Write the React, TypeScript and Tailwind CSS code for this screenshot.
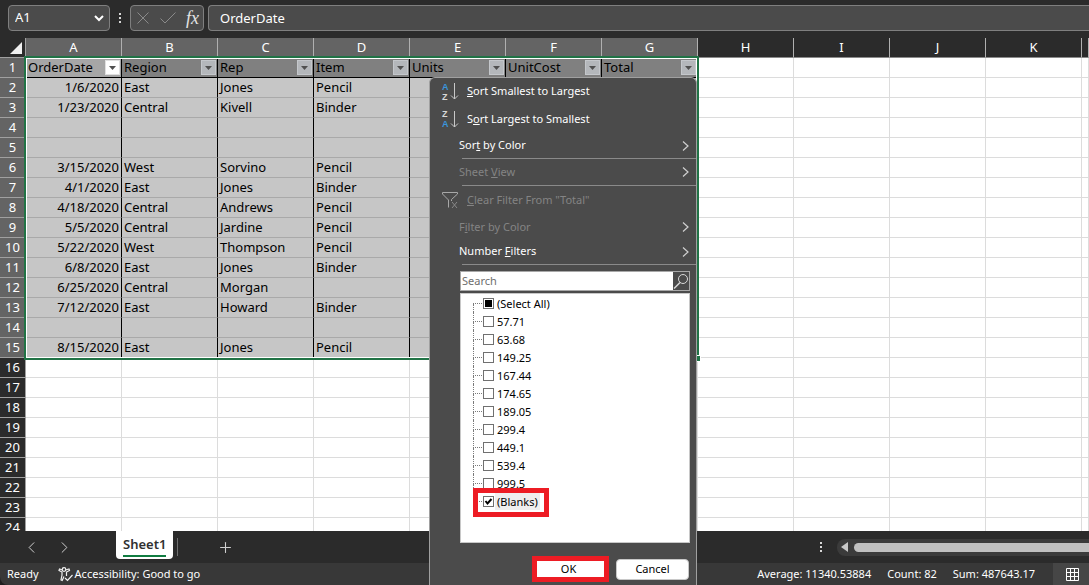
import React from 'react';
import { ChevronLeft, ChevronRight, Plus } from 'lucide-react';

const COLUMNS = ['A', 'B', 'C', 'D', 'E', 'F', 'G', 'H', 'I', 'J', 'K', ''];
const FIELDS = ['OrderDate', 'Region', 'Rep', 'Item', 'Units', 'UnitCost', 'Total'];

const DATA: string[][] = [
  ['1/6/2020', 'East', 'Jones', 'Pencil'],
  ['1/23/2020', 'Central', 'Kivell', 'Binder'],
  [],
  [],
  ['3/15/2020', 'West', 'Sorvino', 'Pencil'],
  ['4/1/2020', 'East', 'Jones', 'Binder'],
  ['4/18/2020', 'Central', 'Andrews', 'Pencil'],
  ['5/5/2020', 'Central', 'Jardine', 'Pencil'],
  ['5/22/2020', 'West', 'Thompson', 'Pencil'],
  ['6/8/2020', 'East', 'Jones', 'Binder'],
  ['6/25/2020', 'Central', 'Morgan', ''],
  ['7/12/2020', 'East', 'Howard', 'Binder'],
  [],
  ['8/15/2020', 'East', 'Jones', 'Pencil'],
];

const ROWS = Array.from({ length: 24 }, (_, i) => i + 1);
const LAST_SELECTED_ROW = 15;

const VALUES = ['57.71', '63.68', '149.25', '167.44', '174.65', '189.05', '299.4', '449.1', '539.4', '999.5'];

const FormulaBar = () => (
  <header className="flex h-[38px] shrink-0 items-start bg-[#2b2b2b] pt-[5px] pl-2 text-[13px] text-white">
    <div className="flex h-[26px] w-[102px] items-center rounded border border-[#7f7f7f] bg-[#4b4b4b] pl-1.5">
      <input aria-label="Name box" defaultValue="A1" className="w-[78px] bg-transparent outline-none" />
      <button aria-label="Show names">
        <svg width="12" height="10" viewBox="0 0 12 10" fill="none" stroke="#fff" strokeWidth="2">
          <path d="M2 3l4 4 4-4" />
        </svg>
      </button>
    </div>
    <svg className="mx-[9px] mt-2" width="2" height="12" viewBox="0 0 2 12" fill="#d8d8d8">
      <path d="M0 0h2v2H0zM0 4h2v2H0zM0 8h2v2H0z" />
    </svg>
    <div className="flex h-[26px] w-[74px] items-center justify-between rounded border border-[#7f7f7f] bg-[#4b4b4b] pr-1 pl-1.5">
      <button aria-label="Cancel entry">
        <svg width="12" height="12" viewBox="0 0 12 12" stroke="#8a8a8a">
          <path d="M0.5 0.5l11 11M11.5 0.5l-11 11" />
        </svg>
      </button>
      <button aria-label="Enter">
        <svg width="16" height="12" viewBox="0 0 16 12" fill="none" stroke="#8a8a8a">
          <path d="M0.5 6.5l4.5 4.5L15.5 0.5" />
        </svg>
      </button>
      <button aria-label="Insert function" className="font-['Liberation_Serif',serif] text-[18px] leading-5 text-[#e4e4e4] italic">
        fx
      </button>
    </div>
    <input
      aria-label="Formula"
      defaultValue="OrderDate"
      className="ml-1 h-[26px] min-w-0 flex-1 rounded-l border border-r-0 border-[#7f7f7f] bg-[#4b4b4b] pl-[11px] outline-none"
    />
  </header>
);

const FilterButton = ({ name, active }: { name: string; active: boolean }) => (
  <button
    aria-label={`Filter ${name}`}
    className={`flex h-[15px] w-[15px] items-center justify-center border ${active ? 'border-[#e0e0e0] bg-white' : 'border-[#c4c7cb] bg-[#b4b7bb]'}`}
  >
    <svg width="7" height="4" viewBox="0 0 7 4" fill="#505050">
      <path d="M0 0h7L3.5 4z" />
    </svg>
  </button>
);

const cellClass = (row: number, col: number) => {
  if (row > LAST_SELECTED_ROW || col > 6) return 'border-[#dcdcdc] bg-white';
  const side = col < 6 ? 'border-r-black' : 'border-r-[#a9a9a9]';
  if (row === 1) return `${side} border-b-black ${col === 0 ? 'bg-[#a6a6a6]' : 'bg-[#808080]'}`;
  return `${side} border-b-[#a9a9a9] bg-[#c6c6c6]`;
};

const Sheet = () => (
  <main className="relative min-h-0 flex-1 overflow-hidden bg-white">
    <table className="w-full table-fixed border-separate border-spacing-0 text-[13px] leading-[19px] text-black">
      <colgroup>
        <col className="w-[26px]" />
        {COLUMNS.map((c) => (
          <col key={c} className={c ? 'w-24' : ''} />
        ))}
      </colgroup>
      <thead>
        <tr className="text-white">
          <th className="h-5 border-r border-b border-[#a0a0a0] bg-[#2b2b2b] p-0">
            <svg className="mr-[3px] ml-auto" width="12" height="12" viewBox="0 0 12 12" fill="#f0f0f0">
              <path d="M12 0v12H0z" />
            </svg>
          </th>
          {COLUMNS.map((c, i) => (
            <th
              key={c}
              className={`h-5 border-r border-b p-0 font-normal ${i < 7 ? 'border-[#b0b0b0] bg-[#646464]' : 'border-r-[#b0b0b0] border-b-[#8a8a8a] bg-[#2b2b2b]'}`}
            >
              {c}
            </th>
          ))}
        </tr>
      </thead>
      <tbody>
        {ROWS.map((row) => (
          <tr key={row}>
            <th
              className={`h-5 border-r border-b border-[#a0a0a0] p-0 font-normal text-white ${row <= LAST_SELECTED_ROW ? 'bg-[#646464]' : 'bg-[#2b2b2b]'}`}
            >
              {row}
            </th>
            {COLUMNS.map((c, col) => (
              <td
                key={c}
                className={`h-5 overflow-hidden border-r border-b p-0 whitespace-nowrap ${cellClass(row, col)} ${row > 1 && col === 0 ? 'pr-0.5 text-right' : 'pl-0.5'}`}
              >
                {row === 1 && col < 7 ? (
                  <div className="flex items-center justify-between pr-px">
                    {FIELDS[col]}
                    <FilterButton name={FIELDS[col]} active={col === 0} />
                  </div>
                ) : (
                  row > 1 && DATA[row - 2]?.[col]
                )}
              </td>
            ))}
          </tr>
        ))}
      </tbody>
    </table>
    {/* Selection frame with its fill handle */}
    <div className="pointer-events-none absolute top-[18px] left-6 h-[304px] w-[675px] border-2 border-[#217346]">
      <div className="h-full border border-white" />
      <div className="absolute -right-1 -bottom-1 h-[7px] w-[7px] border border-white bg-[#217346]" />
    </div>
  </main>
);

const SortIcon = ({ top, bottom }: { top: string; bottom: string }) => (
  <span className="flex w-[18px] items-center pl-px">
    <span className="flex flex-col font-['Liberation_Sans',sans-serif] text-[9px] leading-[10px] font-bold">
      <span className={top === 'A' ? 'text-[#3a96dd]' : 'text-[#d8d8d8]'}>{top}</span>
      <span className={bottom === 'A' ? 'text-[#3a96dd]' : 'text-[#d8d8d8]'}>{bottom}</span>
    </span>
    <svg className="ml-auto" width="9" height="17" viewBox="0 0 9 17" fill="none" stroke="#c8c8c8">
      <path d="M4.5 0v16M1 12.5L4.5 16 8 12.5" />
    </svg>
  </span>
);

const ClearFilterIcon = () => (
  <svg width="18" height="17" viewBox="0 0 18 17" fill="none" stroke="#a8a8a8">
    <path d="M7.5 15.5V8L1.5 2V0.5h15V2L10.5 7.5V9" />
    <path d="M11 10l5 6M16 10L11 16" stroke="#8a8a8a" />
  </svg>
);

interface ItemProps {
  className: string;
  icon?: React.ReactNode;
  arrow?: boolean;
  disabled?: boolean;
  children: React.ReactNode;
}

const MenuItem = ({ className, icon, arrow, disabled, children }: ItemProps) => (
  <button
    disabled={disabled}
    className={`flex w-full items-center pr-1.5 text-left ${icon ? 'gap-2 pl-[11px]' : 'pl-[29px]'} ${disabled ? 'text-[#848484]' : 'text-white'} ${className}`}
  >
    {icon}
    <span>{children}</span>
    {arrow && (
      <svg className="ml-auto" width="9" height="10" viewBox="0 0 9 10" fill="none" stroke="#d0d0d0" strokeWidth="1.2">
        <path d="M2 0.5L7 5 2 9.5" />
      </svg>
    )}
  </button>
);

const Separator = () => <hr className="ml-8 border-[#8a8a8a]" />;

interface CheckRowProps {
  label: string;
  state?: 'checked' | 'mixed';
  first?: boolean;
  last?: boolean;
}

const CheckRow = ({ label, state, first, last }: CheckRowProps) => (
  <li className="relative flex h-[18px] items-center">
    <span className="flex h-full w-[9px] flex-col">
      <span className={`h-[10px] border-b border-dotted border-[#7a7a7a] ${first ? '' : 'border-l'}`} />
      <span className={`h-2 border-dotted border-[#7a7a7a] ${last ? '' : 'border-l'}`} />
    </span>
    <label className="flex items-center gap-px">
      <span className="ml-px grid">
        <input
          type="checkbox"
          defaultChecked={state === 'checked'}
          ref={(el) => {
            if (el) el.indeterminate = state === 'mixed';
          }}
          className="col-start-1 row-start-1 h-[11px] w-[11px] appearance-none border border-[#707070] bg-white"
        />
        {state && (
          <svg className="col-start-1 row-start-1" width="11" height="11" viewBox="0 0 11 11" fill="none">
            {state === 'mixed' ? (
              <path d="M2 2h7v7H2z" fill="#000" />
            ) : (
              <path d="M2.5 5l2 2.5L8.5 3" stroke="#000" strokeWidth="2" />
            )}
          </svg>
        )}
      </span>
      <span className={`px-0.5 leading-[17px] ${last ? 'bg-[#efeeee]' : ''}`}>{label}</span>
    </label>
    {last && <span className="pointer-events-none absolute -top-1 left-0 h-[29px] w-[76px] border-5 border-[#ed1c24]" />}
  </li>
);

const FilterMenu = () => (
  <section
    aria-label="Filter Total"
    className="absolute top-[77px] bottom-0 left-[429px] w-[268px] overflow-hidden rounded-t-md border border-b-0 border-[#a0a0a0] bg-[#4b4b4b] text-[11px]"
  >
    <MenuItem className="h-[27px]" icon={<SortIcon top="A" bottom="Z" />}>
      <u>S</u>ort Smallest to Largest
    </MenuItem>
    <MenuItem className="h-7" icon={<SortIcon top="Z" bottom="A" />}>
      S<u>o</u>rt Largest to Smallest
    </MenuItem>
    <MenuItem className="h-[25px]" arrow>
      Sor<u>t</u> by Color
    </MenuItem>
    <Separator />
    <MenuItem className="h-[26px]" arrow disabled>
      Sheet <u>V</u>iew
    </MenuItem>
    <Separator />
    <MenuItem className="h-[29px]" icon={<ClearFilterIcon />} disabled>
      <u>C</u>lear Filter From "Total"
    </MenuItem>
    <MenuItem className="h-6" arrow disabled>
      F<u>i</u>lter by Color
    </MenuItem>
    <MenuItem className="h-[25px]" arrow>
      Number <u>F</u>ilters
    </MenuItem>
    <Separator />

    <div className="mt-1.5 mr-1.5 ml-[30px]">
      <div className="flex h-5 border border-[#a8a8a8]">
        <input
          aria-label="Search"
          placeholder="Search"
          className="min-w-0 flex-1 bg-white pl-px text-black outline-none placeholder:text-[#6e6e6e]"
        />
        <button aria-label="Find">
          <svg width="16" height="16" viewBox="0 0 16 16" fill="none" stroke="#d8d8d8">
            <circle cx="10" cy="6" r="4.5" />
            <path d="M7 9.5L1 15.5" strokeWidth="1.5" />
          </svg>
        </button>
      </div>
      <ul className="mt-0.5 h-[250px] border border-[#c8c8c8] bg-white pl-3 text-black">
        <CheckRow label="(Select All)" state="mixed" first />
        {VALUES.map((v) => (
          <CheckRow key={v} label={v} />
        ))}
        <CheckRow label="(Blanks)" state="checked" last />
      </ul>
      <div className="mt-[13px] flex items-center justify-end gap-[7px] pr-px text-black">
        <button className="h-[26px] w-[77px] border-5 border-[#ed1c24] bg-white pr-1 leading-4">OK</button>
        <button className="h-[21px] w-[73px] rounded border border-[#c8c8c8] bg-white leading-4">Cancel</button>
      </div>
    </div>
  </section>
);

const TabBar = () => (
  <nav className="flex h-8 shrink-0 bg-[#2b2b2b] text-[#d0d0d0]">
    <div className="flex w-[116px] items-center gap-3.5 pl-[22px]">
      <button aria-label="Previous sheet">
        <ChevronLeft size={19} strokeWidth={1.25} />
      </button>
      <button aria-label="Next sheet">
        <ChevronRight size={19} strokeWidth={1.25} />
      </button>
    </div>
    <button className="h-7 w-[57px] rounded-b bg-white px-[7px] text-[13px] font-semibold text-[#303030]">
      <span className="block border-b-2 border-[#107c41] leading-[22px]">Sheet1</span>
    </button>
    <span className="mt-[7px] ml-1 h-[18px] w-px bg-[#707070]" />
    <button aria-label="New sheet" className="ml-[39px]">
      <Plus size={17} strokeWidth={1.5} />
    </button>
    <div className="ml-auto flex w-[269px] items-center">
      <svg className="mr-[15px]" width="2" height="11" viewBox="0 0 2 11" fill="#d8d8d8">
        <path d="M0 0h2v2H0zM0 4h2v2H0zM0 8h2v2H0z" />
      </svg>
      <div className="flex h-[17px] flex-1 items-center gap-1.5 rounded-l-lg bg-[#3b3b3b] pl-1">
        <svg width="7" height="10" viewBox="0 0 7 10" fill="#c8c8c8">
          <path d="M7 0v10L0 5z" />
        </svg>
        <div className="h-[9px] flex-1 rounded-l-full bg-[#c0c0c0]" />
      </div>
    </div>
  </nav>
);

const StatusBar = () => (
  <footer className="flex h-[22px] shrink-0 items-center rounded-bl-lg bg-[#383838] pl-[7px] text-[11px] text-white">
    <span>Ready</span>
    <svg className="ml-[19px]" width="16" height="15" viewBox="0 0 16 15" fill="none" stroke="#f0f0f0" strokeWidth="1.2">
      <circle cx="6" cy="2.5" r="1.8" />
      <path d="M4.5 3L1.5 2 1 3.5l3 1.5v3l-1 5 1.2.5L6 9.5M7.5 3l3.5-1 .5 1.5L8.5 5v4M7 11l2.5 2.5L14.5 8" />
    </svg>
    <span className="ml-px">Accessibility: Good to go</span>
    <span className="ml-auto">Average: 11340.53884</span>
    <span className="ml-4">Count: 82</span>
    <span className="ml-4">Sum: 487643.17</span>
    <button aria-label="Normal view" className="ml-[18px] flex h-full w-9 items-center bg-[#464646] pl-[13px]">
      <svg width="13" height="13" viewBox="0 0 13 13" fill="none" stroke="#fff">
        <path d="M.5.5h12v12H.5zM4.5.5v12M8.5.5v12M.5 4.5h12M.5 8.5h12" />
      </svg>
    </button>
  </footer>
);

export default function App() {
  return (
    <div className="relative flex h-screen flex-col overflow-hidden bg-[#1f1f1f] font-['Noto_Sans',sans-serif]">
      <FormulaBar />
      <Sheet />
      <TabBar />
      <StatusBar />
      <FilterMenu />
    </div>
  );
}
